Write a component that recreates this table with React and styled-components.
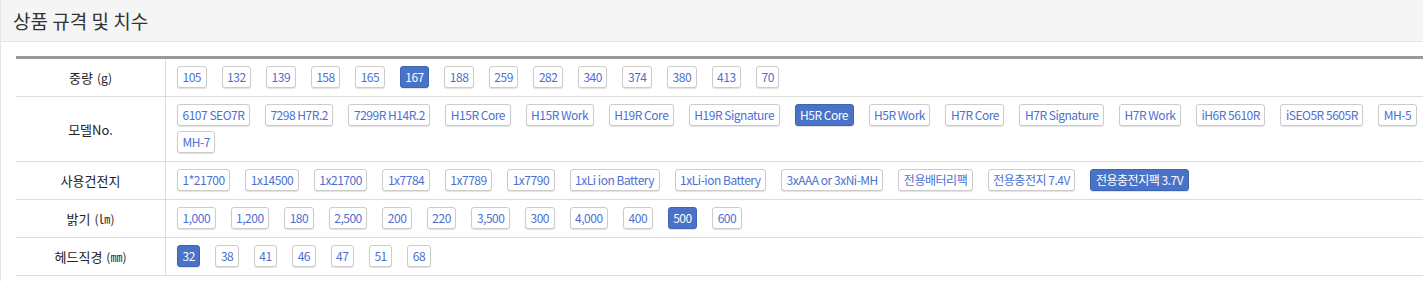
import React from 'react';
import styled, { createGlobalStyle } from 'styled-components';

const GlobalStyle = createGlobalStyle`
  body {
    margin: 0;
    background: #fff;
    font-family: "Noto Sans CJK KR", "Noto Sans", sans-serif;
    color: #333;
  }
`;

const Panel = styled.section`
  border-left: 1px solid #e5e5e5;
  min-height: 281px;
  box-sizing: border-box;
`;

const Header = styled.h2`
  margin: 0;
  height: 41px;
  line-height: 41px;
  padding: 0 12px;
  background: #f5f5f5;
  border-bottom: 1px solid #e6e6e6;
  font-size: 19px;
  font-weight: 400;
  color: #333;
`;

const Body = styled.div`
  padding: 14px 0 0 15px;
`;

const SpecTable = styled.div`
  border-top: 3px solid #999;
`;

const Row = styled.div`
  display: grid;
  grid-template-columns: 150px 1fr;
  border-bottom: 1px solid #ddd;
`;

const Label = styled.div`
  display: flex;
  align-items: center;
  justify-content: center;
  border-right: 1px solid #ddd;
  font-size: 13px;
  color: #222;
`;

const Unit = styled.span`
  font-size: 12px;
  margin-left: 4px;
`;

const Values = styled.div`
  display: flex;
  flex-wrap: wrap;
  gap: 5px 15px;
  padding: 7px 2px 8px 11px;
`;

const Chip = styled.button`
  height: 22px;
  padding: 0 4.5px;
  border: 1px solid ${p => (p.$active ? '#3f63b5' : '#ccc')};
  border-radius: 3px;
  background: ${p => (p.$active ? '#4a72c6' : '#fff')};
  color: ${p => (p.$active ? '#fff' : '#4d6fd2')};
  box-shadow: 0 1px 1px rgba(0, 0, 0, 0.12);
  font-family: inherit;
  font-size: 12px;
  letter-spacing: -0.48px;
  line-height: 20px;
  white-space: nowrap;
  cursor: pointer;
`;

const specs = [
  {
    label: '중량',
    unit: '(g)',
    active: '167',
    values: ['105', '132', '139', '158', '165', '167', '188', '259', '282', '340', '374', '380', '413', '70'],
  },
  {
    label: '모델No.',
    active: 'H5R Core',
    values: [
      '6107 SEO7R', '7298 H7R.2', '7299R H14R.2', 'H15R Core', 'H15R Work', 'H19R Core',
      'H19R Signature', 'H5R Core', 'H5R Work', 'H7R Core', 'H7R Signature', 'H7R Work',
      'iH6R 5610R', 'iSEO5R 5605R', 'MH-5', 'MH-7',
    ],
  },
  {
    label: '사용건전지',
    active: '전용충전지팩 3.7V',
    values: [
      '1*21700', '1x14500', '1x21700', '1x7784', '1x7789', '1x7790', '1xLi ion Battery',
      '1xLi-ion Battery', '3xAAA or 3xNi-MH', '전용배터리팩', '전용충전지 7.4V', '전용충전지팩 3.7V',
    ],
  },
  {
    label: '밝기',
    unit: '(㏐)',
    active: '500',
    values: ['1,000', '1,200', '180', '2,500', '200', '220', '3,500', '300', '4,000', '400', '500', '600'],
  },
  {
    label: '헤드직경',
    unit: '(㎜)',
    active: '32',
    values: ['32', '38', '41', '46', '47', '51', '68'],
  },
];

export default function App() {
  return (
    <>
      <GlobalStyle />
      <Panel>
        <Header>상품 규격 및 치수</Header>
        <Body>
          <SpecTable>
            {specs.map(spec => (
              <Row key={spec.label}>
                <Label>
                  {spec.label}
                  {spec.unit && <Unit>{spec.unit}</Unit>}
                </Label>
                <Values>
                  {spec.values.map(v => (
                    <Chip key={v} $active={v === spec.active}>
                      {v}
                    </Chip>
                  ))}
                </Values>
              </Row>
            ))}
          </SpecTable>
        </Body>
      </Panel>
    </>
  );
}
